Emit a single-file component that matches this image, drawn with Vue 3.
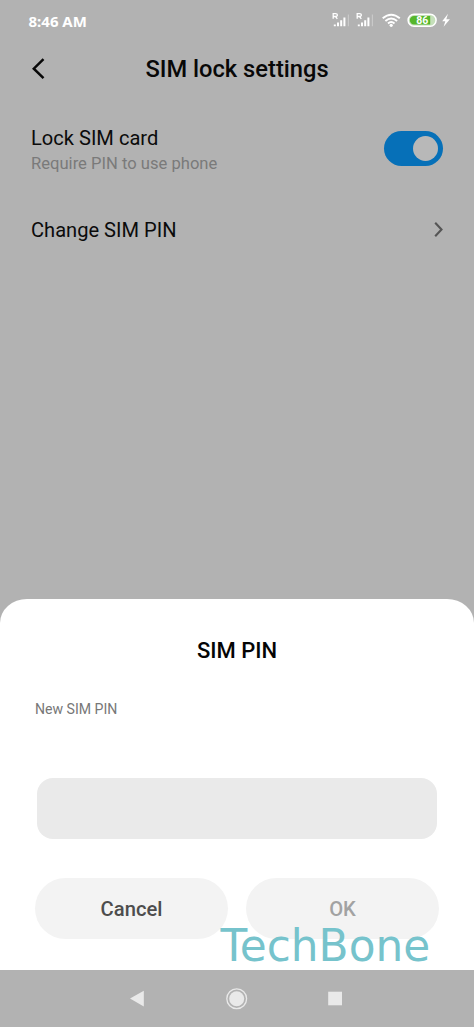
<script setup>
const rows = [
  { title: 'Lock SIM card', note: 'Require PIN to use phone', kind: 'toggle' },
  { title: 'Change SIM PIN', kind: 'link' },
]
</script>

<template>
  <div class="phone">
    <div class="status">
      <span class="time">8:46 AM</span>
      <svg class="indicators" width="122" height="20" viewBox="0 0 122 20" fill="#fff">
        <g v-for="x in [0, 24]" :key="x" :transform="`translate(${x} 0)`">
          <path d="M1.200 8.800V3.600H3.600C6 3.600 6 6.500 3.600 6.500H1.200M3.500 6.500L5.300 8.800" fill="none" stroke="#fff" stroke-width="1.300" />
          <path d="M1.800 14.500h2v1.800h-2zM5 12.500h2v3.800h-2zM8.200 10.300h2v6h-2zM11.400 7.500h2v8.800h-2z" />
          <path d="M15.800 4.500h1.200v11.800H15.800z" opacity=".3" />
        </g>
        <g fill="none" stroke="#fff" stroke-width="1.9">
          <path d="M50.700 8.300Q59.200 1 67.800 8.300" />
          <path d="M53.400 11Q59.200 6 65.100 11" />
          <path d="M56 13.500Q59.200 10.700 62.500 13.500" />
        </g>
        <circle cx="59.200" cy="15.300" r="1.600" />
        <rect x="76.100" y="4.300" width="28" height="11.900" rx="5.900" fill="#c5dfba" stroke="#fff" stroke-width="1.500" />
        <path d="M82 6.100H98.200V14.400H82A4.150 4.150 0 0 1 82 6.100Z" fill="#55b72b" />
        <text x="90.200" y="13.900" text-anchor="middle">86</text>
        <path d="M116 3.800L110.200 11.200H113.300L111.600 16.800L117.900 9.200H114.300Z" />
      </svg>
    </div>

    <header class="header">
      <svg class="back" width="14" height="22" viewBox="0 0 14 22"><path d="M12.500 1.200L2.800 10.700L12.500 20.200" /></svg>
      <h1>SIM lock settings</h1>
    </header>

    <main class="settings">
      <div v-for="row in rows" :key="row.title" class="row" :class="row.kind">
        <div class="copy">
          <div class="row-title">{{ row.title }}</div>
          <div v-if="row.note" class="note">{{ row.note }}</div>
        </div>
        <span v-if="row.kind === 'toggle'" class="switch"><i></i></span>
        <svg v-else width="9" height="16" viewBox="0 0 9 16" class="chevron"><path d="M1.200 .8L7.500 7.500L1.200 14.200" /></svg>
      </div>
    </main>

    <section class="sheet">
      <h2>SIM PIN</h2>
      <p class="label">New SIM PIN</p>
      <div class="field"></div>
      <div class="actions">
        <button>Cancel</button>
        <button disabled>OK</button>
      </div>
      <span class="watermark">TechBone</span>
    </section>

    <nav class="nav">
      <svg width="474" height="57" viewBox="0 0 474 57" fill="#e9e9e9">
        <path d="M130 28.600L143.800 20.800V36.400Z" />
        <circle cx="236.700" cy="28.700" r="7.500" />
        <circle cx="236.700" cy="28.700" r="9.900" fill="none" stroke="#e9e9e9" stroke-width="1.300" />
        <rect x="328.200" y="21.700" width="13.800" height="13.600" />
      </svg>
    </nav>
  </div>
</template>

<style>
body { margin: 0; }
</style>

<style scoped>
.phone { width: 474px; height: 1027px; display: flex; flex-direction: column; background: #b2b2b2; font-family: Roboto, sans-serif; overflow: hidden; }
.status { display: flex; justify-content: space-between; height: 42px; padding: 0 20.300px 0 28.500px; flex: none; }
.time { font: 700 15px/20px "Noto Sans", sans-serif; color: #fff; margin-top: 11px; white-space: nowrap; }
.indicators { margin-top: 10.400px; }
.indicators text { font: 700 10.5px Roboto, sans-serif; }
.header { height: 54px; display: flex; align-items: center; justify-content: center; position: relative; flex: none; }
.back { position: absolute; left: 31px; top: 16px; }
.back path { fill: none; stroke: #080808; stroke-width: 2.500; }
h1 { margin: 0; font-size: 23.700px; line-height: 28px; font-weight: 500; color: #080808; }
.settings { flex: 1; padding: 0 31px; }
.row { display: flex; justify-content: space-between; align-items: center; }
.toggle { height: 104px; }
.toggle .copy { padding-top: 5px; }
.link { height: 60px; }
.row-title { font-size: 20.100px; line-height: 25px; color: #0b0b0b; }
.note { font-size: 16.600px; line-height: 25px; color: #7a7a7a; }
.switch { width: 59px; height: 35px; border-radius: 18px; background: #0670b8; display: flex; justify-content: flex-end; align-items: center; box-sizing: border-box; padding-right: 5px; }
.switch i { width: 25px; height: 25px; border-radius: 50%; background: #b8b8b8; }
.chevron path { fill: none; stroke: #555; stroke-width: 2.100; }
.sheet { position: relative; height: 371px; flex: none; box-sizing: border-box; background: #fff; border-radius: 27px 27px 0 0 / 24px 24px 0 0; padding: 39px 35px 0; }
h2 { margin: 0; text-align: center; font-size: 22px; line-height: 26px; font-weight: 500; color: #050505; }
.label { margin: 35px 0 0; font-size: 14.100px; line-height: 20px; color: #777; }
.field { margin: 59px 2px 0; height: 61px; border-radius: 16px; background: #eaeaea; }
.actions { display: grid; grid-template-columns: 1fr 1fr; gap: 18px; margin-top: 39px; }
button { height: 61px; border: 0; border-radius: 31px; background: #f3f3f3; color: #4d4d4d; font: 500 20.200px/61px Roboto, sans-serif; padding: 1px 0 0; }
button:disabled { color: #a2a2a2; }
.watermark { position: absolute; left: 220.500px; top: 321px; font: 43.800px/52px "DejaVu Sans", sans-serif; color: #76c3cc; white-space: nowrap; }
.nav { height: 57px; flex: none; background: #b2b2b2; }
.nav svg { display: block; }
</style>
